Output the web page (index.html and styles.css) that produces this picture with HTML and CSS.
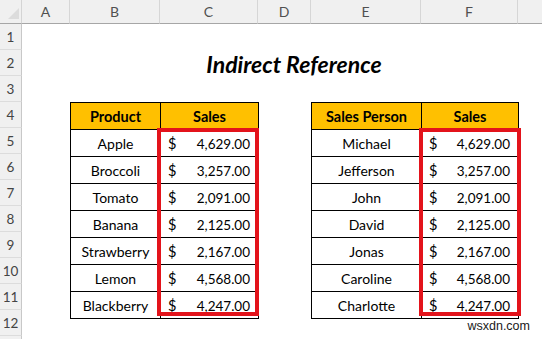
FILE: index.html
```html
<!DOCTYPE html>
<html lang="en">
<head>
<meta charset="utf-8">
<title>Indirect Reference</title>
<link rel="stylesheet" href="styles.css">
</head>
<body>
<div class="sheet">
  <div class="corner"><svg width="22" height="24" viewBox="0 0 22 24"><polygon points="19,8 19,19 8,19" fill="#dcdcdc"/></svg></div>
  <div class="ch">A</div>
  <div class="ch">B</div>
  <div class="ch">C</div>
  <div class="ch">D</div>
  <div class="ch">E</div>
  <div class="ch">F</div>
  <div class="ch last"></div>

  <div class="rh r1">1</div>
  <div class="rh r2">2</div>
  <div class="rh r3">3</div>
  <div class="rh r4">4</div>
  <div class="rh r5">5</div>
  <div class="rh r6">6</div>
  <div class="rh r7">7</div>
  <div class="rh r8">8</div>
  <div class="rh r9">9</div>
  <div class="rh r10">10</div>
  <div class="rh r11">11</div>
  <div class="rh r12">12</div>
  <div class="rh r13"></div>

  <div class="title">Indirect Reference</div>

  <table class="tbl left">
    <colgroup><col class="c-prod"><col class="c-sales"></colgroup>
    <tr><th>Product</th><th>Sales</th></tr>
    <tr><td>Apple</td><td><div class="m"><span>$</span><span>4,629.00</span></div></td></tr>
    <tr><td>Broccoli</td><td><div class="m"><span>$</span><span>3,257.00</span></div></td></tr>
    <tr><td>Tomato</td><td><div class="m"><span>$</span><span>2,091.00</span></div></td></tr>
    <tr><td>Banana</td><td><div class="m"><span>$</span><span>2,125.00</span></div></td></tr>
    <tr><td>Strawberry</td><td><div class="m"><span>$</span><span>2,167.00</span></div></td></tr>
    <tr><td>Lemon</td><td><div class="m"><span>$</span><span>4,568.00</span></div></td></tr>
    <tr><td>Blackberry</td><td><div class="m"><span>$</span><span>4,247.00</span></div></td></tr>
  </table>

  <table class="tbl right">
    <colgroup><col class="c-person"><col class="c-sales2"></colgroup>
    <tr><th>Sales Person</th><th>Sales</th></tr>
    <tr><td>Michael</td><td><div class="m"><span>$</span><span>4,629.00</span></div></td></tr>
    <tr><td>Jefferson</td><td><div class="m"><span>$</span><span>3,257.00</span></div></td></tr>
    <tr><td>John</td><td><div class="m"><span>$</span><span>2,091.00</span></div></td></tr>
    <tr><td>David</td><td><div class="m"><span>$</span><span>2,125.00</span></div></td></tr>
    <tr><td>Jonas</td><td><div class="m"><span>$</span><span>2,167.00</span></div></td></tr>
    <tr><td>Caroline</td><td><div class="m"><span>$</span><span>4,568.00</span></div></td></tr>
    <tr><td>Charlotte</td><td><div class="m"><span>$</span><span>4,247.00</span></div></td></tr>
  </table>

  <div class="hl hl-left"></div>
  <div class="hl hl-right"></div>

  <div class="wm">wsxdn.com</div>
</div>
</body>
</html>
```

FILE: styles.css
```css
html, body {
  margin: 0;
  padding: 0;
  background: #ffffff;
  overflow: hidden;
}
body {
  width: 542px;
  height: 339px;
  font-family: "Lato", "Open Sans", sans-serif;
  color: #000;
}
.sheet {
  display: grid;
  grid-template-columns: 22px 48px 90px 98px 53px 110px 97px 1fr;
  grid-template-rows: 24px repeat(13, 26px);
  width: 542px;
  height: 339px;
  overflow: hidden;
}
.corner {
  grid-column: 1;
  grid-row: 1;
  background: #f0f0f0;
  border-right: 1px solid #d4d4d4;
  border-bottom: 1px solid #a6a6a6;
  box-sizing: border-box;
}
.corner svg { display: block; }
.ch {
  grid-row: 1;
  background: #f0f0f0;
  border-right: 1px solid #d6d6d6;
  border-bottom: 1px solid #a6a6a6;
  box-sizing: border-box;
  display: flex;
  align-items: center;
  justify-content: center;
  font-size: 14px;
  color: #505050;
}
.ch.last { border-right: none; }
.rh {
  grid-column: 1;
  background: #f0f0f0;
  border-right: 1px solid #c8c8c8;
  border-bottom: 1px solid #dcdcdc;
  box-sizing: border-box;
  display: flex;
  align-items: center;
  justify-content: center;
  font-size: 13.5px;
  color: #444;
}
.r1 { grid-row: 2; }
.r2 { grid-row: 3; }
.r3 { grid-row: 4; }
.r4 { grid-row: 5; }
.r5 { grid-row: 6; }
.r6 { grid-row: 7; }
.r7 { grid-row: 8; }
.r8 { grid-row: 9; }
.r9 { grid-row: 10; }
.r10 { grid-row: 11; }
.r11 { grid-row: 12; }
.r12 { grid-row: 13; }
.r13 { grid-row: 14; }

.title {
  grid-column: 3 / 8;
  grid-row: 3;
  display: flex;
  align-items: center;
  justify-content: center;
  font-size: 23px;
  font-weight: 700;
  font-style: italic;
  padding-top: 1px;
}

.tbl {
  grid-row: 5 / 13;
  border-collapse: collapse;
  table-layout: fixed;
  width: 100%;
  height: 100%;
  font-size: 14px;
}
.tbl.left { grid-column: 3 / 5; }
.tbl.right { grid-column: 6 / 8; }
.c-prod { width: 90px; }
.c-sales { width: 98px; }
.c-person { width: 110px; }
.c-sales2 { width: 97px; }
.tbl th, .tbl td {
  border: 1px solid #000;
  height: 26px;
  padding: 0;
  text-align: center;
  vertical-align: middle;
}
.tbl th {
  background: #ffc000;
  font-weight: 700;
  font-size: 14.5px;
}
.m {
  display: flex;
  justify-content: space-between;
  align-items: baseline;
  padding: 0 8px 0 7px;
  font-size: 13.5px;
}
.m span:first-child { font-size: 14.5px; }

.hl {
  position: relative;
  grid-row: 6 / 13;
  pointer-events: none;
}
.hl::after {
  content: "";
  position: absolute;
  border: 4px solid #e3131b;
}
.hl-left { grid-column: 4; }
.hl-left::after { left: -3px; right: -1px; top: 0; bottom: -6px; }
.hl-right { grid-column: 7; }
.hl-right::after { left: -2px; right: -3px; top: 0; bottom: -6px; }

.wm {
  grid-column: 6 / 9;
  grid-row: 13;
  justify-self: end;
  align-self: end;
  margin: 0 12px 3px 0;
  font-family: "Liberation Sans", Arial, sans-serif;
  font-size: 12.5px;
  color: #1a1a1a;
}
```
